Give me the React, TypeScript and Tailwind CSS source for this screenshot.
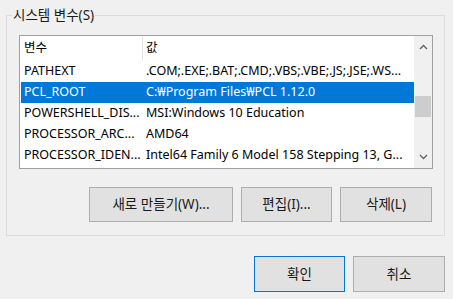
import React from 'react';

const FONT = '"Noto Sans", "Noto Sans CJK KR", sans-serif';

const rows = [
  { name: 'PATHEXT', value: '.COM;.EXE;.BAT;.CMD;.VBS;.VBE;.JS;.JSE;.WS...' },
  { name: 'PCL_ROOT', value: 'C:\u20A9Program Files\u20A9PCL 1.12.0', selected: true },
  { name: 'POWERSHELL_DIS...', value: 'MSI:Windows 10 Education' },
  { name: 'PROCESSOR_ARC...', value: 'AMD64' },
  { name: 'PROCESSOR_IDEN...', value: 'Intel64 Family 6 Model 158 Stepping 13, G...' },
];

function Chevron({ up }: { up?: boolean }) {
  return (
    <svg width="9" height="6" viewBox="0 0 9 6" className="text-[#606060]">
      <polyline
        points={up ? '1,5 4.5,1.5 8,5' : '1,1 4.5,4.5 8,1'}
        fill="none"
        stroke="currentColor"
        strokeWidth="1.3"
      />
    </svg>
  );
}

function Button({ label, width, primary }: { label: string; width: string; primary?: boolean }) {
  return (
    <button
      className={`${width} h-full bg-[#e1e1e1] border ${
        primary ? 'border-[#0078d7]' : 'border-[#adadad]'
      } text-[13.5px] text-[#1a1a1a] flex items-center justify-center`}
    >
      {label}
    </button>
  );
}

export default function App() {
  return (
    <div
      className="w-[453px] h-[299px] bg-[#f0f0f0] pt-[15px] pl-[6px] text-black overflow-hidden"
      style={{ fontFamily: FONT }}
    >
      {/* 시스템 변수 group */}
      <div className="relative w-[439px] h-[221px] border border-[#dcdcdc] pt-[19px] pl-[12px]">
        <span className="absolute left-[5px] top-[-10px] px-[1px] bg-[#f0f0f0] text-[13.5px] leading-[18px] text-[#1a1a1a]">
          시스템 변수(S)
        </span>

        <div className="w-[414px] h-[134px] border border-[#a0a0a0] bg-white flex">
          <div className="flex-1 flex flex-col pl-[1px] text-[12.5px] overflow-hidden">
            <div className="h-[25px] flex items-center">
              <div className="w-[122px] h-full pl-[3px] flex items-center border-r border-[#e5e5e5]">변수</div>
              <div className="pl-[3px]">값</div>
            </div>
            {rows.map((r) => (
              <div
                key={r.name}
                className={`h-[21px] flex items-center whitespace-nowrap ${
                  r.selected ? 'bg-[#0078d7] text-white' : ''
                }`}
              >
                <div className="w-[122px] pl-[3px] overflow-hidden">{r.name}</div>
                <div className="pl-[3px] overflow-hidden">{r.value}</div>
              </div>
            ))}
          </div>

          {/* scrollbar */}
          <div className="w-[18px] bg-[#f0f0f0] flex flex-col">
            <div className="h-[22px] flex items-center justify-center">
              <Chevron up />
            </div>
            <div className="flex-1 pt-[38px]">
              <div className="mx-[1px] h-[21px] bg-[#cdcdcd]" />
            </div>
            <div className="h-[22px] flex items-center justify-center">
              <Chevron />
            </div>
          </div>
        </div>

        <div className="w-[413px] h-[35px] mt-[18px] flex justify-end gap-[8px]">
          <Button label="새로 만들기(W)..." width="w-[144px]" />
          <Button label="편집(I)..." width="w-[91px]" />
          <Button label="삭제(L)" width="w-[92px]" />
        </div>
      </div>

      <div className="w-[439px] h-[36px] mt-[20px] flex justify-end gap-[8px]">
        <Button label="확인" width="w-[91px]" primary />
        <Button label="취소" width="w-[92px]" />
      </div>
    </div>
  );
}
